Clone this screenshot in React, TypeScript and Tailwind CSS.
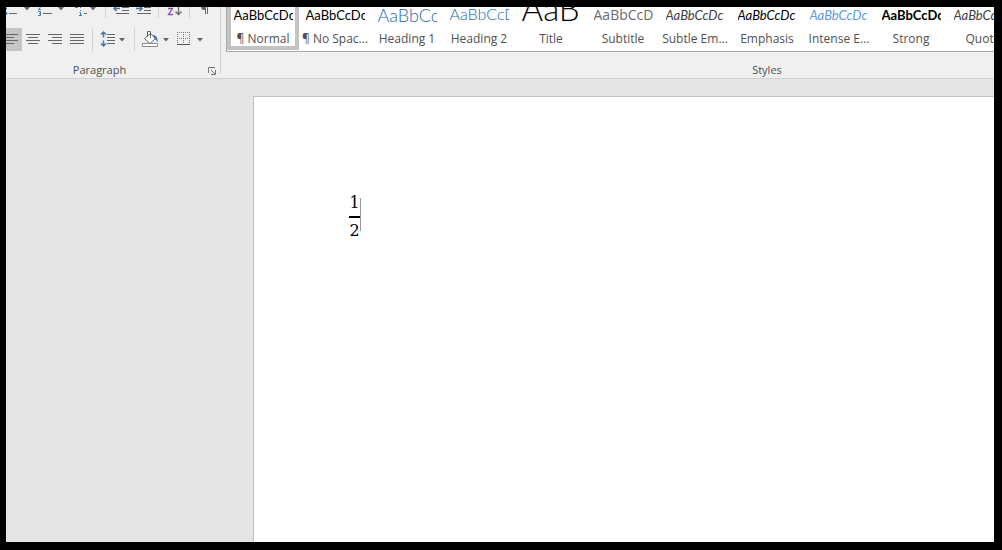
import type { ReactNode } from "react";

const ui = "font-['Open_Sans','Noto_Sans',sans-serif]";

function Tool({ label, className, children, width, height }: {
  label: string; className: string; children: ReactNode; width: number; height: number;
}) {
  return (
    <button type="button" aria-label={label} title={label} className={`shrink-0 ${className}`}>
      <svg width={width} height={height} viewBox={`0 0 ${width} ${height}`} fill="none" className="block" aria-hidden="true">
        {children}
      </svg>
    </button>
  );
}

function Divider() {
  return (
    <span className="flex w-[9px] shrink-0 justify-center self-stretch">
      <span className="w-px bg-[#d0d0d0]" />
    </span>
  );
}

const gray = "#666";
const blue = "#4179ac";

function Caret({ x, y }: { x: number; y: number }) {
  return <path d={`M${x} ${y}h6l-3 3.5z`} fill={gray} />;
}

function ParagraphGroup() {
  return (
    <section aria-label="Paragraph" className="flex w-[215px] shrink-0 flex-col">
      <div className="flex h-[11px] items-start overflow-hidden">
        <Tool label="Bullets" className="w-[27px]" width={27} height={11}>
          <path d="M0 6.500h1.500M0 1.500h1" stroke={blue} strokeWidth="2" />
          <path d="M3 6.500h8" stroke={gray} />
          <Caret x={18} y={0} />
        </Tool>
        <Tool label="Numbering" className="w-[35px]" width={35} height={11}>
          <path d="M7.500 0L5.500 2.500H8M5 4.500h2.500v2H6h1.500v2H5" stroke={blue} />
          <path d="M10 6.500h9" stroke={gray} />
          <Caret x={25} y={0} />
        </Tool>
        <Tool label="Multilevel List" className="w-[33px]" width={33} height={11}>
          <path d="M7 .5h3M12.500 3v1M11.500 5.500h1v3M11 8.500h3" stroke={blue} />
          <path d="M16 6.500h3M12 .5h1" stroke={gray} />
          <Caret x={22} y={0} />
        </Tool>
        <Divider />
        <Tool label="Decrease Indent" className="w-[22px]" width={22} height={11}>
          <path d="M12 .5h7M12 3.500h7M6 6.500h13" stroke={gray} />
          <path d="M10 1.500H4M6.500-1L4 1.500l2.500 2.500" stroke={blue} strokeWidth="1.500" />
        </Tool>
        <Tool label="Increase Indent" className="w-[22px]" width={22} height={11}>
          <path d="M12 .5h7M12 3.500h7M5 6.500h14" stroke={gray} />
          <path d="M4 1.500h6M7.500-1L10 1.500 7.500 4" stroke={blue} strokeWidth="1.500" />
        </Tool>
        <Divider />
        <Tool label="Sort" className="w-[22px]" width={22} height={11}>
          <path d="M5 1.500h4.500L5.500 7.500H10" stroke="#8654aa" strokeWidth="1.300" />
          <path d="M15.500-1v8M12.500 4.500l3 3 3-3" stroke={gray} strokeWidth="1.300" />
        </Tool>
        <Divider />
        <Tool label="Show paragraph marks" className="w-[22px]" width={22} height={11}>
          <path d="M7 0h5v3H9.500Q7.500 3 7 0z" fill={gray} />
          <path d="M11.500 0v7M13.500 0v7" stroke={gray} />
        </Tool>
      </div>
      <div className="mt-2.5 flex h-[23px] items-center">
        <Tool label="Align Left" className="w-4 bg-[#c5c5c5]" width={16} height={23}>
          <path d="M0 6.500h12M0 9.500h8M0 12.500h12M0 15.500h8" stroke={gray} />
        </Tool>
        <Tool label="Center" className="w-[22px]" width={22} height={23}>
          <path d="M4 6.500h14M6 9.500h10M4 12.500h14M6 15.500h10" stroke={gray} />
        </Tool>
        <Tool label="Align Right" className="w-[22px]" width={22} height={23}>
          <path d="M4 6.500h14M8 9.500h10M4 12.500h14M8 15.500h10" stroke={gray} />
        </Tool>
        <Tool label="Justify" className="w-[22px]" width={22} height={23}>
          <path d="M4 6.500h14M4 9.500h14M4 12.500h14M4 15.500h14" stroke={gray} />
        </Tool>
        <Divider />
        <Tool label="Line Spacing" className="w-[33px]" width={33} height={23}>
          <path d="M6.500 4v5.500M4 6.500L6.500 4 9 6.500M6.500 12.500V18M4 15.500L6.500 18 9 15.500" stroke={blue} strokeWidth="1.500" />
          <path d="M10 6.500h8M10 9.500h8M10 12.500h8M10 15.500h8" stroke={gray} />
          <Caret x={22} y={10} />
        </Tool>
        <Divider />
        <Tool label="Shading" className="w-[34px]" width={34} height={23}>
          <path d="M5.500 10.500l6-5 5 5-5.500 5z" fill="#fff" stroke={gray} />
          <path d="M8.500 9V3.500h3V10" stroke={gray} />
          <path d="M14 7l2 .5q3 1.500 2.500 7-1.500-3.500-3-3.500z" fill={blue} />
          <path d="M3.500 15.500h15v3h-15z" fill="#fff" stroke="#888e82" />
          <Caret x={24} y={10} />
        </Tool>
        <Tool label="Borders" className="w-[34px]" width={34} height={23}>
          <path d="M4 4.500h13M4 10.500h13M4.500 4v12M10.500 4v12M16.500 4v12" stroke="#777" strokeDasharray="1 1" />
          <path d="M4 16.500h13" stroke="#555" />
          <Caret x={24} y={10} />
        </Tool>
      </div>
      <div className="mt-auto flex h-4 items-center">
        <h2 className={`flex-1 pr-3 text-center text-[11px] leading-4 text-[#505050] ${ui}`}>Paragraph</h2>
        <Tool label="Paragraph Settings" className="w-4" width={16} height={16}>
          <path d="M3.500 11V5.500H10M6 8l4 4M10.500 8v4.500H6" stroke="#777" />
        </Tool>
      </div>
    </section>
  );
}

const calibri = "font-['Lato',sans-serif]";

const styles = [
  { name: "¶ Normal", sample: "AaBbCcDc", look: `${calibri} text-[13px] leading-5 text-black` },
  { name: "¶ No Spac...", sample: "AaBbCcDc", look: `${calibri} text-[13px] leading-5 text-black` },
  { name: "Heading 1", sample: "AaBbCc", look: `${calibri} text-[18px] leading-5 font-light text-[#1f68b0]` },
  { name: "Heading 2", sample: "AaBbCcD", look: `${calibri} text-[16px] leading-[22px] font-light text-[#1f68b0]` },
  { name: "Title", sample: "AaB", look: `${calibri} text-[33px] leading-[34px] font-light text-black` },
  { name: "Subtitle", sample: "AaBbCcD", look: `${ui} text-[14px] leading-5 text-[#6a6a6a]` },
  { name: "Subtle Em...", sample: "AaBbCcDc", look: `${calibri} text-[13px] leading-5 italic text-[#404040]` },
  { name: "Emphasis", sample: "AaBbCcDc", look: `${calibri} text-[13px] leading-5 italic text-black` },
  { name: "Intense E...", sample: "AaBbCcDc", look: `${calibri} text-[13px] leading-5 italic text-[#5b9bd5]` },
  { name: "Strong", sample: "AaBbCcDc", look: `${calibri} text-[13px] leading-5 font-bold text-black` },
  { name: "Quote", sample: "AaBbCcDc", look: `${calibri} text-[13px] leading-5 italic text-[#404040]` },
];

function StylesGroup() {
  return (
    <section aria-label="Styles" className="flex w-[1087px] shrink-0 flex-col pl-[5px]">
      <div className="flex h-[45px] overflow-hidden border-b border-l border-[#ababab] bg-white">
        {styles.map((s, i) => (
          <button
            key={s.name}
            type="button"
            aria-pressed={i === 0}
            className={`flex h-[43px] w-[72px] shrink-0 flex-col items-center border-x-4 border-b-4 ${i === 0 ? "border-[#c3c3c3]" : "border-transparent"}`}
          >
            <span className={`flex h-[18px] w-[59px] shrink-0 items-end overflow-hidden whitespace-nowrap ${s.look}`}>{s.sample}</span>
            <span className={`mt-1.5 whitespace-nowrap text-[12px] leading-4 text-[#505050] ${ui}`}>{s.name}</span>
          </button>
        ))}
      </div>
      <h2 className={`mt-auto text-center text-[11px] leading-4 text-[#505050] ${ui}`}>Styles</h2>
    </section>
  );
}

export default function App() {
  return (
    <div className="flex min-h-screen flex-col bg-black pt-[7px] pr-2 pb-2 pl-1.5">
      <div className="flex flex-1 flex-col overflow-hidden bg-[#e5e5e5]">
        <header className="flex h-[72px] overflow-hidden border-b border-[#d0d0d0] bg-[#f0f0f0]">
          <ParagraphGroup />
          <div className="mb-1 -ml-px w-px shrink-0 bg-[#d0d0d0]" />
          <StylesGroup />
        </header>
        <main className="flex flex-1 flex-col pt-[17px] pl-[247px]">
          <article className="flex-1 border-t border-l border-[#c0c0c0] bg-white pt-[97px] pl-[95px]">
            <div role="math" aria-label="1 over 2" className="flex w-max font-['DejaVu_Serif',serif] text-[16px] leading-[18px] text-black">
              <div className="flex w-[11px] flex-col items-center">
                <span>1</span>
                <span className="my-1 h-0.5 w-full bg-black" />
                <span>2</span>
              </div>
              <span className="mt-1 h-[33px] w-px bg-[#999]" />
            </div>
          </article>
        </main>
      </div>
    </div>
  );
}
